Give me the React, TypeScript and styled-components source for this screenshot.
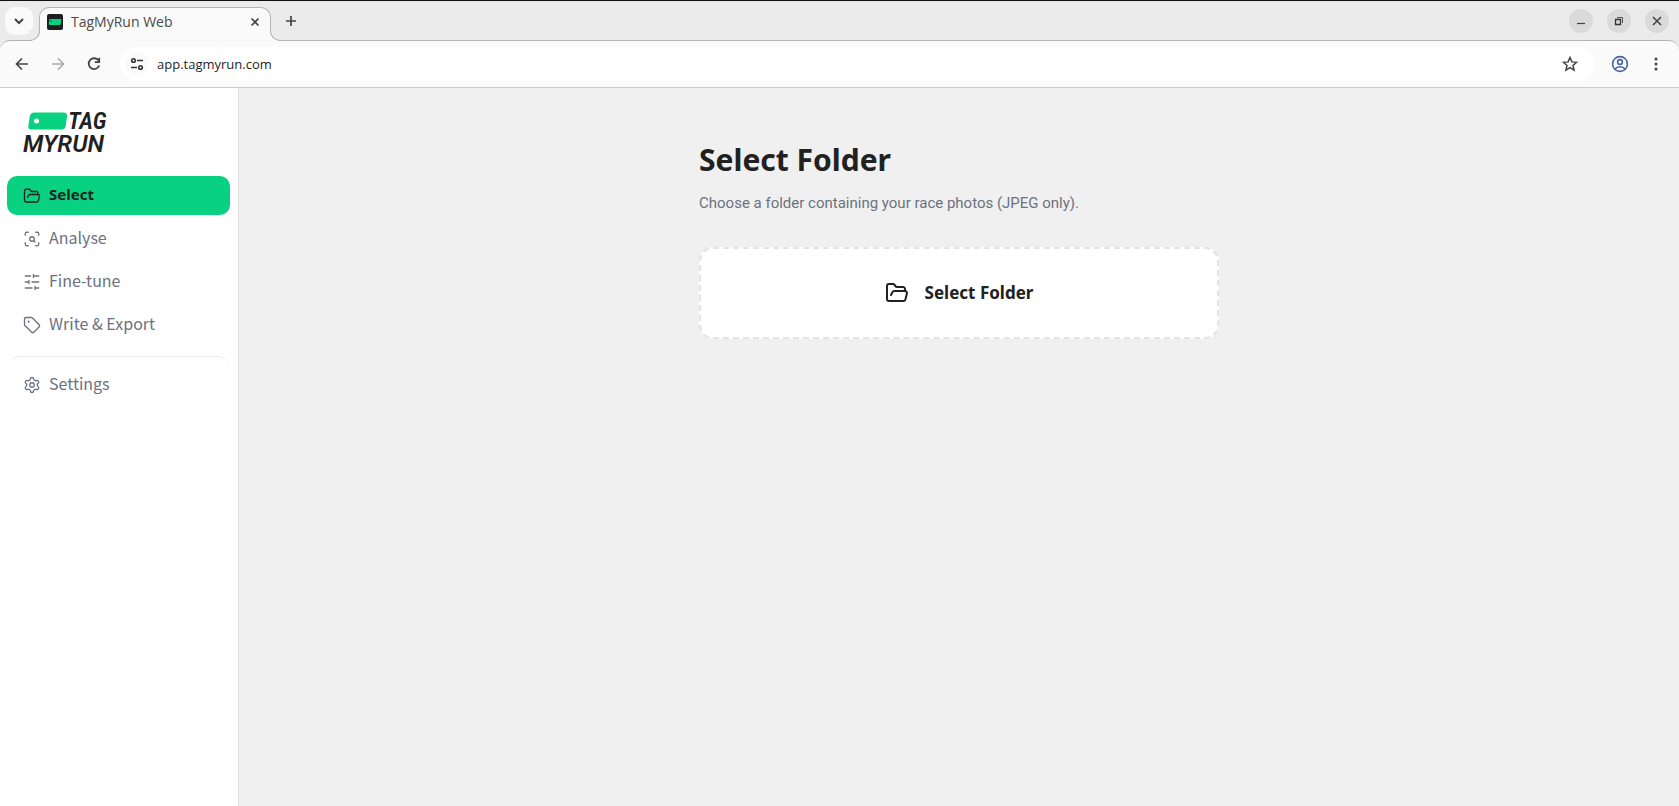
import React from "react";
import styled, { createGlobalStyle } from "styled-components";
import {
  FolderOpen,
  ScanSearch,
  Settings,
  Tag,
  type LucideIcon,
} from "lucide-react";

const color = {
  strip: "#ebebeb",
  toolbar: "#fafafa",
  line: "#b4b4b4",
  chromeInk: "#444444",
  page: "#f0f0f0",
  rule: "#e4e4e4",
  ink: "#212121",
  muted: "#6b7280",
  brand: "#08d181",
};

const sans = `"Noto Sans", "Open Sans", sans-serif`;
const sansNarrow = `"Noto Sans CJK SC", "Noto Sans", sans-serif`;

const GlobalStyle = createGlobalStyle`
  *, *::before, *::after { box-sizing: border-box; }
  body { margin: 0; background: ${color.page}; font-family: ${sans}; color: ${color.ink}; }
  button { font: inherit; color: inherit; cursor: pointer; }
`;

const Window = styled.div`
  display: flex;
  flex-direction: column;
  min-height: 100vh;
  border-top: 1px solid #111;
`;

/* ---- browser frame ---- */

const TabStrip = styled.div`
  display: flex;
  align-items: flex-end;
  height: 39px;
  padding: 0 10px 0 5px;
  background: ${color.strip};
`;

const IconButton = styled.button<{ $size?: number; $fill?: string; $radius?: number }>`
  display: flex;
  flex: none;
  align-items: center;
  justify-content: center;
  width: ${(p) => p.$size ?? 28}px;
  height: ${(p) => p.$size ?? 28}px;
  padding: 0;
  border: 0;
  border-radius: ${(p) => p.$radius ?? 14}px;
  background: ${(p) => p.$fill ?? "transparent"};
`;

const StripSlot = styled.div`
  display: flex;
  gap: 14px;
  align-items: center;
  height: 38px;
`;

const BrowserTab = styled.div`
  position: relative;
  display: flex;
  align-items: center;
  width: 232px;
  height: 34px;
  margin: 0 6px -1px;
  padding: 0 5px 6px 7px;
  border: 1px solid ${color.line};
  border-bottom: 0;
  border-radius: 10px 10px 0 0;
  background: ${color.toolbar};

  &::before,
  &::after {
    content: "";
    position: absolute;
    bottom: 0;
    width: 11px;
    height: 11px;
    border: 0 solid ${color.line};
    border-bottom-width: 1px;
    background: ${color.strip};
  }
  &::before {
    left: -11px;
    border-right-width: 1px;
    border-bottom-right-radius: 10px;
    box-shadow: 3px 3px 0 ${color.toolbar};
    clip-path: inset(0 -1px 0 0);
  }
  &::after {
    right: -11px;
    border-left-width: 1px;
    border-bottom-left-radius: 10px;
    box-shadow: -3px 3px 0 ${color.toolbar};
    clip-path: inset(0 0 0 -1px);
  }
`;

const TabTitle = styled.span`
  flex: 1;
  margin-left: 8px;
  font: 400 14px/20px "Open Sans", ${sans};
  color: #4a4a4a;
`;

const WindowControls = styled(StripSlot)`
  margin-left: auto;
`;

const ToolbarBack = styled.div`
  background: ${color.strip};
`;

const Toolbar = styled.div`
  display: flex;
  align-items: center;
  height: 48px;
  padding: 0 9px 0 8px;
  border: 0 solid ${color.line};
  border-top-width: 1px;
  border-bottom: 1px solid #cbcbcb;
  border-radius: 10px 10px 0 0;
  background: ${color.toolbar};
`;

const ToolGroup = styled.div`
  display: flex;
  gap: 8px;
`;

const AddressBar = styled.label`
  display: flex;
  flex: 1;
  align-items: center;
  height: 34px;
  margin: 0 12px;
  padding: 0 10px 0 5px;
  border-radius: 17px;
  background: #fff;
`;

const AddressInput = styled.input`
  flex: 1;
  min-width: 0;
  margin-left: 8px;
  padding: 0;
  border: 0;
  outline: 0;
  background: transparent;
  font: 400 13px/20px "Open Sans", ${sans};
  color: #1f1f1f;
`;

/* ---- application ---- */

const AppBody = styled.div`
  display: flex;
  flex: 1;
`;

const Sidebar = styled.aside`
  flex: none;
  width: 239px;
  padding: 22px 8px 0 7px;
  border-right: 1px solid #e0e0e0;
  background: #fff;
`;

const Logo = styled.a`
  display: flex;
  flex-direction: column;
  margin: 0 0 21px 16px;
  color: ${color.ink};
  text-decoration: none;
  font: italic 600 24px/22px Roboto, ${sans};
`;

const LogoTop = styled.span`
  display: flex;
  align-items: center;
  margin-bottom: 1px;
  padding-left: 5px;
  font-family: "Roboto Condensed", Roboto, ${sans};
`;

const NavList = styled.nav`
  display: flex;
  flex-direction: column;
  gap: 4px;
`;

const NavItem = styled.a<{ $active?: boolean }>`
  display: flex;
  align-items: center;
  gap: 8px;
  height: 39px;
  padding: 0 16px;
  border-radius: 10px;
  background: ${(p) => (p.$active ? color.brand : "transparent")};
  color: ${(p) => (p.$active ? color.ink : color.muted)};
  font: ${(p) => (p.$active ? `700 15px/24px ${sans}` : `400 16px/24px ${sansNarrow}`)};
  text-decoration: none;
`;

const NavLabel = styled.span`
  padding-bottom: 3px;
`;

const NavFooter = styled.nav`
  margin-top: 12px;
  padding-top: 8px;
  border-top: 1px solid #ececec;
  border-radius: 12px;
`;

const Main = styled.main`
  flex: 1;
  padding: 52px 24px;
`;

const Content = styled.section`
  max-width: 520px;
  margin: 0 auto;
`;

const Title = styled.h1`
  margin: 0 0 12px;
  font: 700 30px/40px ${sans};
`;

const Lead = styled.p`
  margin: 0 0 33px;
  font: 400 15px/22px Roboto, ${sans};
  color: ${color.muted};
`;

const FolderButton = styled.button`
  display: flex;
  align-items: center;
  justify-content: center;
  gap: 16px;
  width: 100%;
  height: 92px;
  border: 2px dashed ${color.rule};
  border-radius: 14px;
  background: #fff;
  && {
    font: 700 17px/24px ${sans};
  }
`;

/* ---- drawings ---- */

const Glyph = ({
  d,
  size = 16,
  width = 2,
  ink = color.chromeInk,
}: {
  d: string;
  size?: number;
  width?: number;
  ink?: string;
}) => (
  <svg width={size} height={size} viewBox="0 0 16 16" fill="none" stroke={ink} strokeWidth={width} aria-hidden>
    <path d={d} />
  </svg>
);

const Favicon = () => (
  <svg width="16" height="16" viewBox="0 0 16 16" aria-hidden>
    <rect width="16" height="16" rx="2" fill="#1c1f20" />
    <path d="M3.3 5h10.2q1 0 .8 1l-.6 4q-.2 1-1.2 1H2.6q-1 0-.9-1l.5-4q.1-1 1.1-1z" fill={color.brand} />
    <circle cx="4" cy="7.2" r=".7" fill="#1c1f20" />
  </svg>
);

const SiteInfo = () => (
  <svg width="14" height="14" viewBox="0 0 14 14" fill="none" stroke="#333" strokeWidth="1.6" aria-hidden>
    <circle cx="3.5" cy="3.5" r="1.8" />
    <path d="M7 3.5h6M1 10.5h6" />
    <circle cx="10.5" cy="10.5" r="1.8" />
  </svg>
);

const Reload = () => (
  <svg width="16" height="16" viewBox="0 0 16 16" fill="none" stroke={color.chromeInk} strokeWidth="1.8" aria-hidden>
    <path d="M12.6 4.6A5.4 5.4 0 1 0 13.2 9.5" />
    <path d="M13.2 1.8v4.4H8.8" />
  </svg>
);

const Profile = () => (
  <svg width="18" height="18" viewBox="0 0 18 18" fill="none" stroke="#4a63a8" strokeWidth="1.6" aria-hidden>
    <circle cx="9" cy="9" r="7.4" />
    <circle cx="9" cy="7" r="2.4" />
    <path d="M3.8 14c1.4-1.7 3.1-2.3 5.2-2.3s3.8.6 5.2 2.3" />
  </svg>
);

const Dots = () => (
  <svg width="4" height="14" viewBox="0 0 4 14" fill={color.chromeInk} aria-hidden>
    <circle cx="2" cy="2" r="1.5" />
    <circle cx="2" cy="7" r="1.5" />
    <circle cx="2" cy="12" r="1.5" />
  </svg>
);

const Restore = () => (
  <svg width="10" height="10" viewBox="0 0 10 10" fill="none" stroke="#333" aria-hidden>
    <path d="M1.5 3.5h5v5h-5z" strokeWidth="1.3" />
    <path d="M3 1.5h5.5V7" strokeWidth=".8" />
  </svg>
);

const LogoTag = () => (
  <svg width="40" height="18" viewBox="0 0 40 18" aria-hidden>
    <path
      d="M6.5.5h29q4 0 3.500 4l-1.200 9q-.6 4-4.300 4h-30Q0 17.500.3 14l1.500-9.500q.7-4 4.700-4z"
      fill={color.brand}
    />
    <circle cx="8.5" cy="9" r="2.5" fill="#fff" />
  </svg>
);

const Tune = ({ size, strokeWidth }: { size: number; strokeWidth: number }) => (
  <svg
    width={size}
    height={size}
    viewBox="0 0 24 24"
    fill="none"
    stroke="currentColor"
    strokeWidth={strokeWidth}
    strokeLinecap="round"
    aria-hidden
  >
    <path d="M21 4h-7M10 4H3M21 12h-9M8 12H3M21 20h-5M12 20H3M14 2v4M8 10v4M16 18v4" />
  </svg>
);

const NavLink = ({
  label,
  icon: Icon,
  active,
}: {
  label: string;
  icon: LucideIcon | typeof Tune;
  active?: boolean;
}) => (
  <NavItem href="#" $active={active} aria-current={active ? "page" : undefined}>
    <Icon size={18} strokeWidth={1.75} />
    <NavLabel>{label}</NavLabel>
  </NavItem>
);

const cross = "M4 4l8 8M12 4l-8 8";

export default function App() {
  return (
    <>
      <GlobalStyle />
      <Window>
        <TabStrip>
          <StripSlot>
            <IconButton $fill={color.toolbar} $radius={10} aria-label="Search tabs">
              <Glyph d="M4 6l4 4 4-4" />
            </IconButton>
          </StripSlot>
          <BrowserTab>
            <Favicon />
            <TabTitle>TagMyRun Web</TabTitle>
            <IconButton $size={20} aria-label="Close tab">
              <Glyph d={cross} size={14} />
            </IconButton>
          </BrowserTab>
          <StripSlot>
            <IconButton aria-label="New tab">
              <Glyph d="M8 3v10M3 8h10" width={1.7} />
            </IconButton>
          </StripSlot>
          <WindowControls>
            <IconButton $size={24} $fill="#dadada" aria-label="Minimise">
              <Glyph d="M4 10.5h8" width={1.2} />
            </IconButton>
            <IconButton $size={24} $fill="#dadada" aria-label="Restore">
              <Restore />
            </IconButton>
            <IconButton $size={24} $fill="#dadada" aria-label="Close window">
              <Glyph d={cross} width={1.6} />
            </IconButton>
          </WindowControls>
        </TabStrip>
        <ToolbarBack>
          <Toolbar>
            <ToolGroup>
              <IconButton aria-label="Back">
                <Glyph d="M14 8H3M8 2.5L2.5 8L8 13.5" width={1.7} />
              </IconButton>
              <IconButton aria-label="Forward">
                <Glyph d="M2 8h11M8 2.5L13.5 8L8 13.5" width={1.7} ink="#adadad" />
              </IconButton>
              <IconButton aria-label="Reload">
                <Reload />
              </IconButton>
            </ToolGroup>
            <AddressBar>
              <IconButton $size={24} $fill={color.toolbar} aria-label="Site information">
                <SiteInfo />
              </IconButton>
              <AddressInput aria-label="Address" defaultValue="app.tagmyrun.com" />
              <IconButton aria-label="Bookmark this page">
                <Glyph
                  d="M8 1.500l1.900 4.400 4.700.4-3.600 3.100 1.100 4.700L8 11.600l-4.100 2.500L5 9.400 1.400 6.300l4.700-.4z"
                  width={1.5}
                />
              </IconButton>
            </AddressBar>
            <ToolGroup>
              <IconButton aria-label="Profile">
                <Profile />
              </IconButton>
              <IconButton aria-label="Browser menu">
                <Dots />
              </IconButton>
            </ToolGroup>
          </Toolbar>
        </ToolbarBack>

        <AppBody>
          <Sidebar>
            <Logo href="#">
              <LogoTop>
                <LogoTag />
                TAG
              </LogoTop>
              <span>MYRUN</span>
            </Logo>
            <NavList aria-label="Steps">
              <NavLink label="Select" icon={FolderOpen} active />
              <NavLink label="Analyse" icon={ScanSearch} />
              <NavLink label="Fine-tune" icon={Tune} />
              <NavLink label="Write & Export" icon={Tag} />
            </NavList>
            <NavFooter aria-label="Application">
              <NavLink label="Settings" icon={Settings} />
            </NavFooter>
          </Sidebar>
          <Main>
            <Content>
              <Title>Select Folder</Title>
              <Lead>Choose a folder containing your race photos (JPEG only).</Lead>
              <FolderButton>
                <FolderOpen size={24} />
                Select Folder
              </FolderButton>
            </Content>
          </Main>
        </AppBody>
      </Window>
    </>
  );
}
